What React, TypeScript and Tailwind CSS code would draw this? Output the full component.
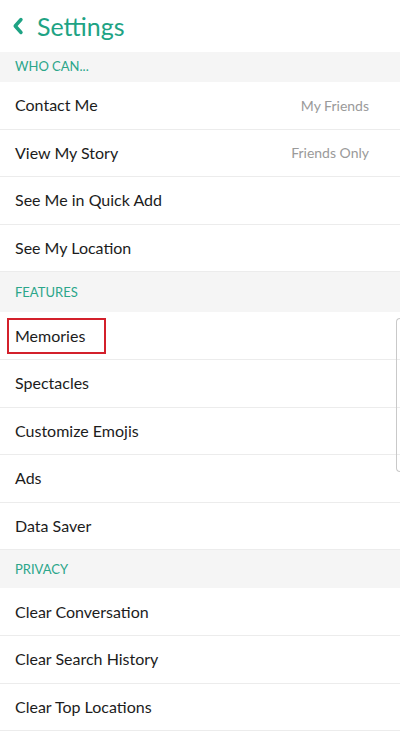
import React from 'react';

type Row = { label: string; value?: string; highlight?: boolean };

const sections: { title: string; rows: Row[]; band: string }[] = [
  {
    title: 'WHO CAN...',
    band: 'h-[30px]',
    rows: [
      { label: 'Contact Me', value: 'My Friends' },
      { label: 'View My Story', value: 'Friends Only' },
      { label: 'See Me in Quick Add' },
      { label: 'See My Location' },
    ],
  },
  {
    title: 'FEATURES',
    band: 'h-[40px]',
    rows: [
      { label: 'Memories', highlight: true },
      { label: 'Spectacles' },
      { label: 'Customize Emojis' },
      { label: 'Ads' },
      { label: 'Data Saver' },
    ],
  },
  {
    title: 'PRIVACY',
    band: 'h-[38px]',
    rows: [
      { label: 'Clear Conversation' },
      { label: 'Clear Search History' },
      { label: 'Clear Top Locations' },
      { label: '' },
    ],
  },
];

const SettingRow: React.FC<{ row: Row }> = ({ row }) => (
  <div className="flex h-[47.6px] items-center justify-between border-b border-[#ececec] bg-white pl-[15px] pr-[31px]">
    {row.highlight ? (
      <span className="-ml-[8px] flex h-[36px] w-[99px] items-center border-2 border-[#d3202b] pl-[6px] text-[16px] text-[#1c1c1c]">
        {row.label}
      </span>
    ) : (
      <span className="text-[16px] text-[#1c1c1c]">{row.label}</span>
    )}
    {row.value && <span className="text-[14px] text-[#9a9a9a]">{row.value}</span>}
  </div>
);

export default function App() {
  return (
    <div
      className="relative h-[735px] w-[400px] overflow-hidden bg-white"
      style={{ fontFamily: 'Lato, "Open Sans", sans-serif' }}
    >
      <header className="flex h-[52px] items-center gap-[13px] pl-[12px]">
        <svg width="12" height="18" viewBox="0 0 12 18" fill="none">
          <path d="M9 2.5 L3.2 9 L9 15.5" stroke="#1ea384" strokeWidth="3.4" strokeLinecap="round" strokeLinejoin="round" />
        </svg>
        <h1 className="text-[25px] leading-none text-[#1ea384]">Settings</h1>
      </header>

      {sections.map((s) => (
        <section key={s.title}>
          <div className={`flex items-center bg-[#f5f5f5] pl-[15px] text-[13px] text-[#2ba68a] ${s.band}`}>
            {s.title}
          </div>
          {s.rows.map((r, i) => (
            <SettingRow key={r.label || i} row={r} />
          ))}
        </section>
      ))}

      <div className="absolute right-0 top-[318px] h-[154px] w-[4px] rounded-l-[4px] border-y border-l border-[#c9c9c9]" />
    </div>
  );
}
